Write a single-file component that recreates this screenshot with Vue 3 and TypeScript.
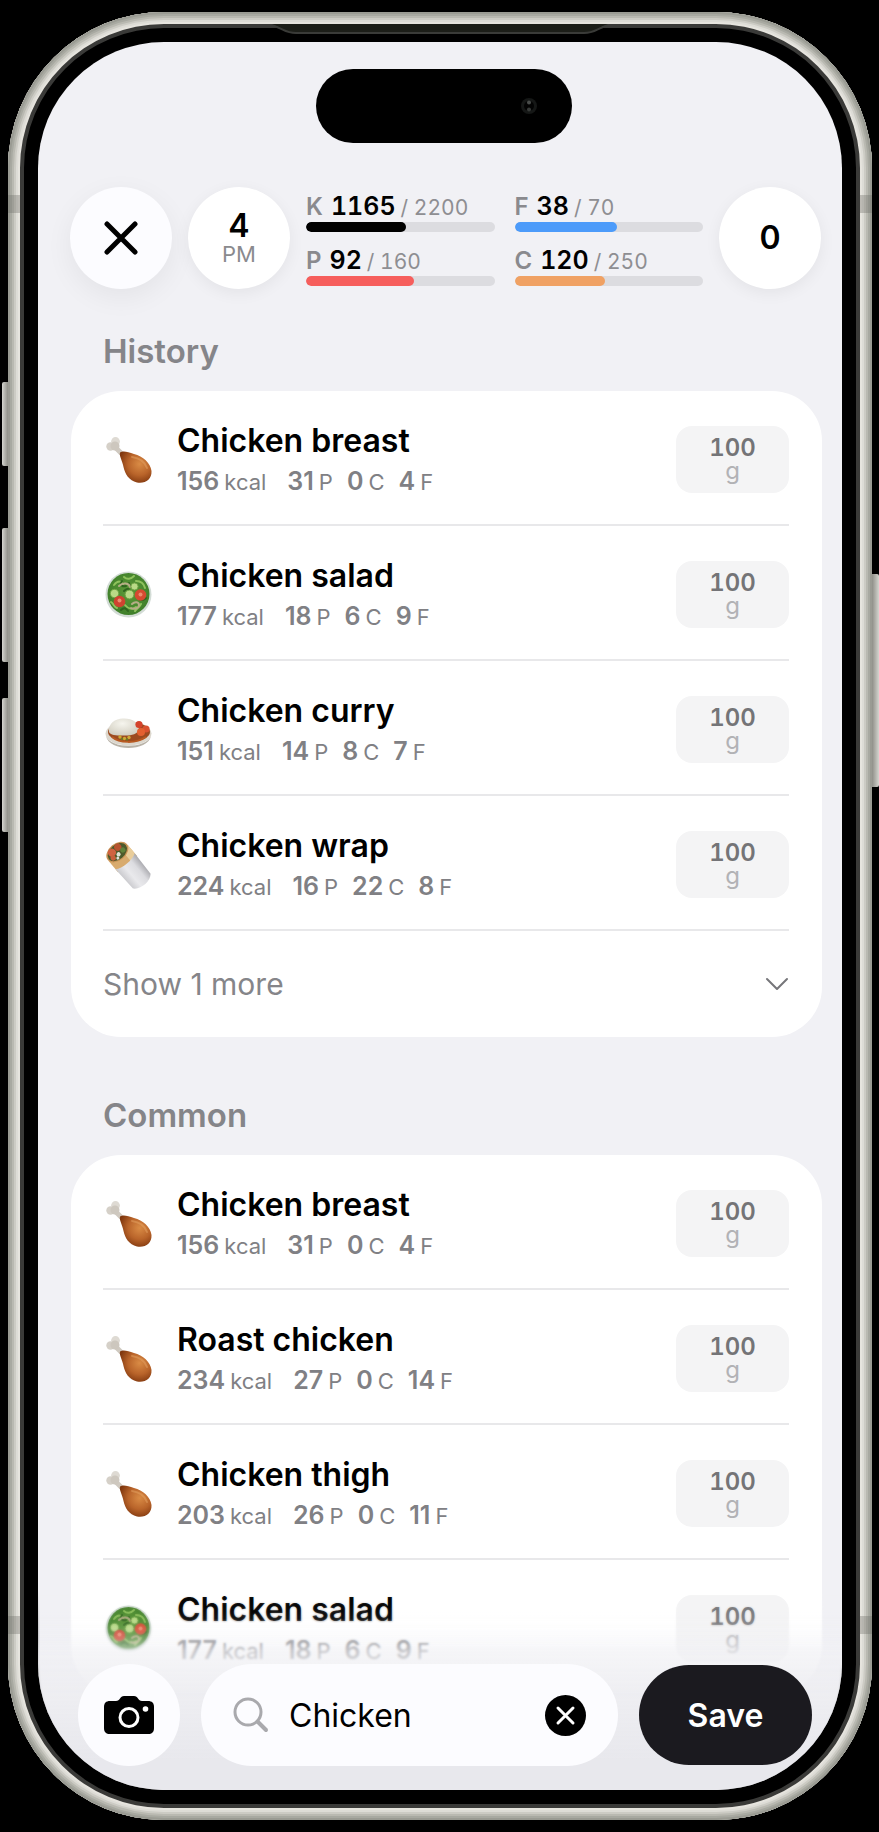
<script setup lang="ts">
import { ref } from 'vue'

type IconName = 'drumstick' | 'salad' | 'curry' | 'wrap'

interface Macro {
  key: string
  label: string
  value: number
  goal: number
}

interface Food {
  name: string
  icon: IconName
  kcal: number
  protein: number
  carbs: number
  fat: number
}

interface Section {
  title: string
  foods: Food[]
  hidden: number
}

const macroColumns: Macro[][] = [
  [
    { key: 'K', label: 'Calories', value: 1165, goal: 2200 },
    { key: 'P', label: 'Protein', value: 92, goal: 160 },
  ],
  [
    { key: 'F', label: 'Fat', value: 38, goal: 70 },
    { key: 'C', label: 'Carbs', value: 120, goal: 250 },
  ],
]

const sections: Section[] = [
  {
    title: 'History',
    hidden: 1,
    foods: [
      { name: 'Chicken breast', icon: 'drumstick', kcal: 156, protein: 31, carbs: 0, fat: 4 },
      { name: 'Chicken salad', icon: 'salad', kcal: 177, protein: 18, carbs: 6, fat: 9 },
      { name: 'Chicken curry', icon: 'curry', kcal: 151, protein: 14, carbs: 8, fat: 7 },
      { name: 'Chicken wrap', icon: 'wrap', kcal: 224, protein: 16, carbs: 22, fat: 8 },
    ],
  },
  {
    title: 'Common',
    hidden: 0,
    foods: [
      { name: 'Chicken breast', icon: 'drumstick', kcal: 156, protein: 31, carbs: 0, fat: 4 },
      { name: 'Roast chicken', icon: 'drumstick', kcal: 234, protein: 27, carbs: 0, fat: 14 },
      { name: 'Chicken thigh', icon: 'drumstick', kcal: 203, protein: 26, carbs: 0, fat: 11 },
      { name: 'Chicken salad', icon: 'salad', kcal: 177, protein: 18, carbs: 6, fat: 9 },
    ],
  },
]

const query = ref('Chicken')
const selected = ref(0)

const percent = (m: Macro): string => `${(m.value / m.goal) * 100}%`
</script>

<template>
  <div class="stage">
    <svg class="sprites" width="0" height="0" aria-hidden="true">
      <defs>
        <radialGradient id="meat" cx="0.62" cy="0.4" r="0.65">
          <stop offset="0" stop-color="#d98b45" />
          <stop offset="0.55" stop-color="#b9642a" />
          <stop offset="1" stop-color="#81380f" />
        </radialGradient>
        <linearGradient id="foil" x1="0" y1="0" x2="1" y2="0">
          <stop offset="0" stop-color="#c9c9cd" />
          <stop offset="0.35" stop-color="#e9e9ec" />
          <stop offset="0.7" stop-color="#dcdce0" />
          <stop offset="1" stop-color="#a9a9ae" />
        </linearGradient>
        <radialGradient id="rice" cx="0.45" cy="0.3" r="0.75">
          <stop offset="0" stop-color="#f6f5ee" />
          <stop offset="1" stop-color="#cfcbbd" />
        </radialGradient>
        <radialGradient id="leaves" cx="0.5" cy="0.45" r="0.55">
          <stop offset="0" stop-color="#5d9a38" />
          <stop offset="1" stop-color="#3f7f2a" />
        </radialGradient>
      </defs>
      <symbol id="drumstick" viewBox="0 0 50 50">
        <path d="M11 12 L20 21" stroke="#cfc9c0" stroke-width="5" stroke-linecap="round" />
        <circle cx="7.500" cy="12.500" r="4.200" fill="#d5d0c8" />
        <circle cx="12.500" cy="7.500" r="4.400" fill="#dedad3" />
        <circle cx="12" cy="12" r="4.500" fill="#cdc7be" />
        <path d="M17 18.500C20 16.500 25 18 31 20C40 22 47.500 29 48.500 37C49 45.500 42 50 34 48.500C26 46.500 22 40 20.500 33C19.500 27 16 22 17 18.500Z" fill="url(#meat)" />
        <path d="M29 23C36 24 42 28 44 34" stroke="#e5a364" stroke-width="2" stroke-linecap="round" fill="none" opacity="0.5" />
      </symbol>
      <symbol id="salad" viewBox="0 0 50 50">
        <circle cx="25.500" cy="25.500" r="23" fill="#d3dcd6" />
        <circle cx="25.500" cy="25" r="21" fill="url(#leaves)" />
        <g fill="none" stroke-linecap="round" stroke-width="2">
          <path d="M11 16c4-5 8-4 9 0M21 8c3 3 7 2 10-1M33 12c5 0 8 3 9 7M8 33c3 2 3 5 6 6M22 36c3 4 8 5 11 2M38 35c-2 4-5 5-6 7" stroke="#8fc25d" />
          <path d="M19 12c-3 4 1 6 4 5M26 14c0 4 4 5 6 3M21 22c3-3 5-3 6 0M18 41c3-3 5-2 7 1M36 30c2 2 5 1 7-1" stroke="#2f651f" />
          <path d="M16 17c4-4 10-3 11 1M29 35c3-3 7-2 7 1s-5 5-8 3" stroke="#b6ad86" />
        </g>
        <g fill="#b9da86" stroke="#70a545" stroke-width="1">
          <circle cx="11.500" cy="24.500" r="4.200" />
          <circle cx="26.500" cy="25.500" r="4.400" />
          <circle cx="31.500" cy="17.500" r="3.600" />
        </g>
        <circle cx="16.500" cy="32.500" r="5.800" fill="#cf4330" />
        <circle cx="37.500" cy="26" r="5.800" fill="#d64a31" />
        <circle cx="16.500" cy="31.500" r="2" fill="#ec8b6e" />
        <circle cx="37.500" cy="25.500" r="2" fill="#ec8b6e" />
      </symbol>
      <symbol id="curry" viewBox="0 0 50 50">
        <ellipse cx="25.500" cy="29.500" rx="23" ry="12" fill="#dcd7cd" />
        <path d="M3 32c5 13 40 13 45 0c-3 16-42 16-45 0z" fill="#b9b3a8" />
        <ellipse cx="26" cy="28" rx="21" ry="10" fill="#9c4a1f" />
        <path d="M9 33c7 6 24 7 34 0" stroke="#b85a22" stroke-width="2" fill="none" />
        <path d="M6 28C5 19 13 14 21 14.500C30 14.500 36 19 36 25C35 31 26 32 20 31.500C13 31.500 7 31 6 28Z" fill="url(#rice)" />
        <circle cx="36" cy="20.500" r="3.600" fill="#d4432c" />
        <circle cx="43" cy="25" r="3.600" fill="#d9512f" />
        <circle cx="38" cy="28" r="4" fill="#e4602f" />
        <g fill="#cda936">
          <circle cx="17" cy="33" r="1.700" />
          <circle cx="21.500" cy="34.500" r="1.700" />
          <circle cx="26" cy="33.500" r="1.700" />
        </g>
        <circle cx="19" cy="35" r="1.200" fill="#6c7a25" />
        <circle cx="24" cy="35.500" r="1.200" fill="#6c7a25" />
      </symbol>
      <symbol id="wrap" viewBox="0 0 50 50">
        <g transform="rotate(-40 25 25)">
          <path d="M12 10H37V25H12Z" fill="#d8ab6e" />
          <path d="M29 10H37V25H29Z" fill="#e9cd9a" />
          <path d="M12 21C18 25 31 25 37 21L36 47C31 53 18 53 13 47Z" fill="url(#foil)" />
          <ellipse cx="24.500" cy="9" rx="12.500" ry="8.500" fill="#c99457" />
          <ellipse cx="24.500" cy="9" rx="11" ry="7.400" fill="#4d5a2b" />
          <circle cx="20" cy="6" r="4" fill="#cf6341" />
          <circle cx="28" cy="5.500" r="3.600" fill="#b9532f" />
          <circle cx="17.500" cy="11" r="2.600" fill="#c7603c" />
          <circle cx="24" cy="11.500" r="2.100" fill="#dde3d4" />
          <circle cx="30" cy="11" r="2.600" fill="#60823a" />
          <circle cx="21" cy="14" r="1.500" fill="#dfe4da" />
        </g>
      </symbol>
    </svg>

    <div class="phone">
      <span class="key key-action"></span>
      <span class="key key-up"></span>
      <span class="key key-down"></span>
      <span class="key key-power"></span>
      <span class="band band-top-left"></span>
      <span class="band band-top-right"></span>
      <span class="band band-bottom-left"></span>
      <span class="band band-bottom-right"></span>
      <svg class="earpiece" width="336" height="12" viewBox="0 0 336 12" aria-hidden="true">
        <path d="M0 0H336C328 2 324 9 312 9H24C12 9 8 2 0 0Z" fill="#1c1e18" />
        <path d="M0 2C10 3 12 9 24 9H312C324 9 326 3 336 2" fill="none" stroke="#3a3b38" stroke-width="2" />
      </svg>

      <div class="screen">
        <div class="status">
          <div class="island">
            <svg width="18" height="18" viewBox="0 0 18 18" aria-hidden="true">
              <circle cx="9" cy="9" r="8" fill="#151716" />
              <circle cx="9" cy="9" r="5" fill="#030303" />
              <circle cx="9" cy="5.500" r="2" fill="#4a4d4b" />
              <circle cx="9" cy="12.500" r="2" fill="#383b39" />
            </svg>
          </div>
        </div>

        <header class="top">
          <button class="round round-close" type="button" aria-label="Close">
            <svg width="34" height="34" viewBox="0 0 34 34" aria-hidden="true">
              <path d="M3 3L31 31M31 3L3 31" stroke="#000" stroke-width="5" stroke-linecap="round" />
            </svg>
          </button>
          <button class="round" type="button">
            <span class="hour">4</span>
            <span class="meridiem">PM</span>
          </button>
          <div class="macros">
            <div v-for="(column, i) in macroColumns" :key="i" class="macro-column">
              <div v-for="m in column" :key="m.key" class="macro">
                <div class="macro-text">
                  <span class="macro-key">{{ m.key }}</span>
                  <span class="macro-value">{{ m.value }}</span>
                  <span class="macro-goal">/ {{ m.goal }}</span>
                </div>
                <div
                  class="track"
                  role="progressbar"
                  :aria-label="m.label"
                  :aria-valuenow="m.value"
                  aria-valuemin="0"
                  :aria-valuemax="m.goal"
                >
                  <div class="fill" :class="`fill-${m.key}`" :style="{ width: percent(m) }"></div>
                </div>
              </div>
            </div>
          </div>
          <button class="round" type="button" aria-label="Selected foods">
            <span class="hour">{{ selected }}</span>
          </button>
        </header>

        <main class="results">
          <section v-for="s in sections" :key="s.title" class="section">
            <h2>{{ s.title }}</h2>
            <div class="card">
              <ul>
                <li v-for="f in s.foods" :key="f.name" class="food">
                  <svg class="food-icon" width="50" height="50" aria-hidden="true">
                    <use :href="`#${f.icon}`" />
                  </svg>
                  <div class="food-text">
                    <h3>{{ f.name }}</h3>
                    <p class="facts">
                      <span class="fact fact-energy"><b>{{ f.kcal }}</b><span>kcal</span></span>
                      <span class="fact"><b>{{ f.protein }}</b><span>P</span></span>
                      <span class="fact"><b>{{ f.carbs }}</b><span>C</span></span>
                      <span class="fact"><b>{{ f.fat }}</b><span>F</span></span>
                    </p>
                  </div>
                  <button class="amount" type="button">
                    <span class="amount-value">100</span>
                    <span class="amount-unit">g</span>
                  </button>
                </li>
              </ul>
              <button v-if="s.hidden" class="more" type="button">
                <span>Show {{ s.hidden }} more</span>
                <svg width="24" height="16" viewBox="0 0 24 16" aria-hidden="true">
                  <path d="M2 3L12 13L22 3" fill="none" stroke="#76767a" stroke-width="2" stroke-linecap="round" stroke-linejoin="round" />
                </svg>
              </button>
            </div>
          </section>
        </main>

        <div class="dock-blur"></div>
        <div class="dock">
          <button class="round round-camera" type="button" aria-label="Take a photo">
            <svg width="50" height="40" viewBox="0 0 50 40" aria-hidden="true">
              <path d="M6 6H12C14 6 15 5 16 3.500C17 2 18 1 20 1H30C32 1 33 2 34 3.500C35 5 36 6 38 6H44C48 6 50 8 50 12V33C50 37 48 39 44 39H6C2 39 0 37 0 33V12C0 8 2 6 6 6Z" fill="#000" />
              <circle cx="25" cy="22.500" r="9" fill="none" stroke="#fff" stroke-width="3" />
              <circle cx="41.500" cy="14" r="2.800" fill="#fff" />
            </svg>
          </button>
          <div class="search">
            <svg width="36" height="36" viewBox="0 0 36 36" aria-hidden="true">
              <circle cx="15" cy="15" r="13" fill="none" stroke="#a9a9ad" stroke-width="3" />
              <path d="M24.500 24.500L33 33" stroke="#a9a9ad" stroke-width="4" stroke-linecap="round" />
            </svg>
            <input v-model="query" type="text" aria-label="Search foods" />
            <button class="clear" type="button" aria-label="Clear search" @click="query = ''">
              <svg width="41" height="41" viewBox="0 0 41 41" aria-hidden="true">
                <circle cx="20.500" cy="20.500" r="20.500" fill="#000" />
                <path d="M13 13L28 28M28 13L13 28" stroke="#fff" stroke-width="3" stroke-linecap="round" />
              </svg>
            </button>
          </div>
          <button class="save" type="button">Save</button>
        </div>
      </div>
    </div>
  </div>
</template>

<style>
body {
  background: #000;
}
</style>

<style scoped>
.stage {
  display: flex;
  min-height: 100vh;
  box-sizing: border-box;
  padding: 12px 7px 12px 8px;
  overflow: hidden;
  background: #000;
  font-family: Inter, 'Liberation Sans', sans-serif;
  color: #000;
}

.sprites {
  position: absolute;
}

button {
  margin: 0;
  padding: 0;
  border: 0;
  background: none;
  color: inherit;
  font: inherit;
}

svg {
  display: block;
  flex: none;
}

/* Metal frame and bezel */
.phone {
  position: relative;
  display: flex;
  flex: 1;
  min-width: 0;
  padding: 30px;
  border-radius: 156px;
  box-shadow:
    inset 0 0 0 2px #9a9b93,
    inset 0 0 0 4px #a8a9a1,
    inset 0 0 0 6px #b9b9b1,
    inset 0 0 0 8px #cccbc4,
    inset 0 0 0 10px #dddcd6,
    inset 0 0 0 12px #e6e4de,
    inset 0 0 0 16px #3a3a38;
}

.key {
  position: absolute;
  left: -6px;
  width: 6px;
  border-radius: 2px 0 0 2px;
  background: linear-gradient(90deg, #d5d5cf, #8f8f88);
}

.key-action {
  top: 370px;
  height: 84px;
}

.key-up {
  top: 516px;
  height: 134px;
}

.key-down {
  top: 686px;
  height: 134px;
}

.key-power {
  top: 562px;
  right: -7px;
  left: auto;
  width: 7px;
  height: 213px;
  border-radius: 0 2px 2px 0;
  background: linear-gradient(90deg, #8f8f88, #d5d5cf);
}

.band {
  position: absolute;
  width: 12px;
  height: 18px;
  background: rgb(110 110 104 / 35%);
}

.band-top-left {
  top: 183px;
  left: 0;
}

.band-top-right {
  top: 183px;
  right: 0;
}

.band-bottom-left {
  bottom: 186px;
  left: 0;
}

.band-bottom-right {
  right: 0;
  bottom: 186px;
}

.earpiece {
  position: absolute;
  top: 12px;
  left: 50%;
  margin-left: -168px;
}

.screen {
  position: relative;
  flex: 1;
  min-width: 0;
  overflow: hidden;
  border-radius: 126px;
  background: #f1f1f5;
}

.status {
  display: flex;
  justify-content: center;
  padding: 27px 20px 44px 28px;
}

.island {
  display: flex;
  align-items: center;
  justify-content: flex-end;
  box-sizing: border-box;
  width: 256px;
  height: 74px;
  padding-right: 34px;
  border-radius: 37px;
  background: #000;
}

/* Day summary */
.top {
  display: flex;
  align-items: center;
  gap: 16px;
  padding: 0 21px 0 32px;
}

.round {
  display: flex;
  flex: none;
  flex-direction: column;
  align-items: center;
  justify-content: center;
  width: 102px;
  height: 102px;
  border-radius: 50%;
  background: #fff;
  box-shadow: 0 4px 16px rgb(0 0 0 / 6%);
}

.round-close {
  background: #fcfcff;
  box-shadow: 0 8px 28px rgb(0 0 0 / 6%);
}

.hour {
  font-size: 32px;
  font-weight: 600;
  line-height: 32px;
}

.meridiem {
  color: #8a8a8e;
  font-size: 22px;
  line-height: 24px;
}

.macros {
  display: flex;
  flex: 1;
  gap: 20px;
  min-width: 0;
}

.macro-column {
  display: flex;
  flex: 1;
  flex-direction: column;
  gap: 12px;
  min-width: 0;
}

.macro-text {
  display: flex;
  align-items: baseline;
  height: 32px;
  line-height: 32px;
  font-variant-numeric: tabular-nums;
  white-space: nowrap;
}

.macro-key {
  margin-right: 8px;
  color: #8a8a8e;
  font-size: 24px;
  font-weight: 600;
}

.macro-value {
  margin-right: 5px;
  font-size: 25px;
  font-weight: 600;
}

.macro-goal {
  color: #8e8e92;
  font-size: 21px;
}

.track {
  height: 10px;
  overflow: hidden;
  border-radius: 5px;
  background: #dcdce0;
}

.fill {
  height: 10px;
  border-radius: 5px;
}

.fill-K {
  background: #000;
}

.fill-P {
  background: #f65e5c;
}

.fill-F {
  background: #4c9bfa;
}

.fill-C {
  background: #f0a163;
}

/* Food lists */
.results {
  padding: 42px 20px 95px 33px;
}

.section + .section {
  margin-top: 58px;
}

h2 {
  margin: 0 0 20px 32px;
  color: #858589;
  font-size: 33px;
  font-weight: 600;
  line-height: 40px;
}

.card {
  padding: 0 33px 0 32px;
  border-radius: 50px;
  background: #fff;
}

ul {
  margin: 0;
  padding: 0;
  list-style: none;
}

.food {
  display: flex;
  align-items: center;
  gap: 24px;
  box-sizing: border-box;
  height: 135px;
  padding-top: 3px;
  border-bottom: 2px solid #e8e8ea;
}

.food-text {
  flex: 1;
  min-width: 0;
}

h3 {
  margin: 0 0 4px;
  font-size: 32px;
  font-weight: 600;
  line-height: 40px;
}

.facts {
  display: flex;
  gap: 14px;
  margin: 0;
  color: #808084;
  font-size: 22px;
  line-height: 32px;
}

.fact {
  display: flex;
  align-items: baseline;
  gap: 5px;
}

.fact-energy {
  margin-right: 7px;
}

.fact b {
  font-size: 25px;
  font-weight: 600;
}

.amount {
  display: flex;
  flex: none;
  flex-direction: column;
  align-items: center;
  justify-content: center;
  width: 113px;
  height: 67px;
  border-radius: 16px;
  background: #f4f4f5;
  font-size: 24px;
  font-variant-numeric: tabular-nums;
  line-height: 23px;
}

.amount-value {
  color: #747477;
  font-weight: 600;
}

.amount-unit {
  color: #b2b2b5;
}

.more {
  display: flex;
  align-items: center;
  justify-content: space-between;
  width: 100%;
  height: 106px;
  color: #858589;
  font-size: 30px;
}

/* Floating search bar */
.dock-blur {
  position: absolute;
  right: 0;
  bottom: 0;
  left: 0;
  height: 220px;
  background: linear-gradient(
    rgb(240 240 244 / 0%) 0,
    rgb(240 240 244 / 18%) 50px,
    rgb(240 240 244 / 66%) 84px,
    rgb(237 237 241 / 94%) 124px,
    #e8e8ed 190px
  );
  backdrop-filter: blur(1px);
  mask-image: linear-gradient(transparent 20px, #000 80px);
}

.dock {
  position: absolute;
  right: 0;
  bottom: 0;
  left: 0;
  display: flex;
  align-items: center;
  gap: 21px;
  padding: 0 30px 24px 40px;
}

.round-camera {
  background: #fcfcff;
  box-shadow: none;
}

.search {
  display: flex;
  flex: 1;
  align-items: center;
  gap: 20px;
  box-sizing: border-box;
  min-width: 0;
  height: 102px;
  padding: 0 32px;
  border-radius: 51px;
  background: #fcfcff;
}

.search input {
  flex: 1;
  min-width: 0;
  padding: 0;
  border: 0;
  outline: 0;
  background: none;
  color: #000;
  font: inherit;
  font-size: 32px;
}

.clear {
  flex: none;
  border-radius: 50%;
}

.save {
  flex: none;
  width: 173px;
  height: 100px;
  border-radius: 50px;
  background: #1b1a1f;
  color: #fff;
  font-size: 32px;
  font-weight: 600;
}
</style>
